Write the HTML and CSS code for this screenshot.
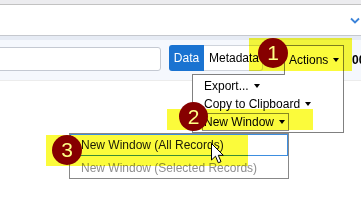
FILE: index.html
```html
<!DOCTYPE html>
<html>
<head>
<meta charset="utf-8">
<link rel="stylesheet" href="styles.css">
</head>
<body>
<div class="topbar"></div>
<header class="header">
  <svg class="chev" width="10" height="7" viewBox="0 0 10 7"><polyline points="1,1.5 5,5.5 9,1.5" fill="none" stroke="#3b83d9" stroke-width="1.8"/></svg>
</header>
<div class="toolbar">
  <div class="search"></div>
  <div class="btn data">Data</div>
  <div class="btn meta">Metadata</div>
  <div class="btn actions">Actions<span class="caret"></span></div>
  <span class="zoomv">00</span>
</div>

<div class="menu">
  <div class="item"><span>Export...</span><span class="caret"></span></div>
  <div class="item"><span>Copy to Clipboard</span><span class="caret"></span></div>
  <div class="item open"><span>New Window</span><span class="caret"></span></div>
</div>

<div class="submenu">
  <div class="sub focus">New Window (All Records)</div>
  <div class="sub disabled">New Window (Selected Records)</div>
</div>

<div class="hl hl1"></div>
<div class="hl hl2"></div>
<div class="hl hl3"></div>

<div class="badge b1">1</div>
<div class="badge b2">2</div>
<div class="badge b3">3</div>

<svg class="cursor" width="14" height="22" viewBox="0 0 14 22">
  <polygon points="0.5,0.5 0.5,17 4.5,13.2 7.3,19.8 10,18.7 7.3,12.3 12.3,12.3" fill="#fff" stroke="#000" stroke-width="1" stroke-linejoin="miter"/>
</svg>
</body>
</html>
```
FILE: styles.css
```css
html, body {
  margin: 0;
  padding: 0;
}
body {
  width: 361px;
  height: 213px;
  overflow: hidden;
  position: relative;
  background: #fff;
  font-family: "Liberation Sans", Arial, sans-serif;
  font-size: 12px;
  color: #000;
}
.topbar {
  height: 4px;
  background: #ececef;
  border-bottom: 1px solid #c2c2c2;
}
.header {
  height: 30px;
  display: flex;
  align-items: center;
  justify-content: flex-end;
  padding-right: 1px;
}
.chev {
  display: block;
  margin-top: 1px;
}
.toolbar {
  box-sizing: border-box;
  height: 46px;
  border-top: 1px solid #c5c8ce;
  border-bottom: 1px solid #ececec;
  background: linear-gradient(#e6ebf4 0 4px, #f5f8fd 4px);
  display: flex;
  align-items: flex-start;
  padding-top: 9px;
  white-space: nowrap;
}
.search {
  box-sizing: border-box;
  flex: none;
  width: 171px;
  height: 24px;
  margin: 2px 8px 0 -10px;
  background: #fff;
  border: 1px solid #c4c9d2;
  border-radius: 3px;
}
.btn {
  box-sizing: border-box;
  flex: none;
}
.data {
  width: 35px;
  height: 26px;
  line-height: 26px;
  text-align: center;
  background: #1a73d1;
  color: #fff;
  border-radius: 3px 0 0 3px;
}
.meta {
  width: 59px;
  height: 26px;
  line-height: 24px;
  padding-left: 5px;
  background: #fff;
  border: 1px solid #cfd4dc;
  border-left: none;
  border-radius: 0 3px 3px 0;
}
.actions {
  position: relative;
  z-index: 2;
  width: 60px;
  height: 30px;
  margin-left: 21px;
  padding: 6px 0 0 4px;
  line-height: 16px;
  background: #fff;
  border: 1px solid #808080;
  border-bottom: none;
}
.caret {
  display: inline-block;
  width: 0;
  height: 0;
  border-left: 3px solid transparent;
  border-right: 3px solid transparent;
  border-top: 4px solid #000;
  margin-left: 5px;
  vertical-align: 2px;
}
.zoomv {
  margin-left: 8px;
  font-weight: bold;
  line-height: 30px;
}
.menu {
  position: absolute;
  z-index: 1;
  left: 192px;
  top: 74px;
  box-sizing: border-box;
  width: 152px;
  height: 59px;
  background: #fff;
  border: 1px solid #808080;
  padding-top: 2px;
}
.item {
  display: block;
  width: max-content;
  margin-left: 9px;
  padding: 0 3px 0 1px;
  line-height: 18px;
  border: 1px solid transparent;
  border-top: none;
  border-bottom: none;
}
.item.open {
  line-height: 16px;
  border: 1px solid #8a8a8a;
}
.submenu {
  position: absolute;
  z-index: 1;
  left: 69px;
  top: 133px;
  box-sizing: border-box;
  width: 220px;
  height: 46px;
  background: #fff;
  border: 1px solid #888;
}
.sub {
  padding-left: 10px;
  white-space: nowrap;
}
.sub.focus {
  height: 22px;
  box-sizing: border-box;
  line-height: 20px;
  border: 1px solid #3d8ee0;
  padding-left: 10px;
  color: #1a1a1a;
}
.sub.disabled {
  padding-top: 2px;
  line-height: 20px;
  padding-left: 11px;
  color: #8f8f8f;
}
.hl {
  position: absolute;
  z-index: 5;
  background: #fbfb3b;
  mix-blend-mode: multiply;
}
.hl1 { left: 249px; top: 38px; width: 103px; height: 33px; }
.hl2 { left: 167px; top: 109px; width: 146px; height: 21px; }
.hl3 { left: 46px; top: 135px; width: 202px; height: 31px; }
.badge {
  position: absolute;
  z-index: 6;
  width: 30px;
  height: 30px;
  border-radius: 50%;
  background: radial-gradient(circle at 50% 45%, #860000 60%, #730000 100%);
  color: #ffff86;
  font-size: 21px;
  line-height: 30px;
  text-align: center;
}
.b1 { left: 258px; top: 38px; }
.b2 { left: 179px; top: 102px; width: 29px; height: 29px; line-height: 29px; }
.b3 { left: 52px; top: 135px; }
.cursor {
  position: absolute;
  z-index: 7;
  left: 211px;
  top: 143px;
}
```
